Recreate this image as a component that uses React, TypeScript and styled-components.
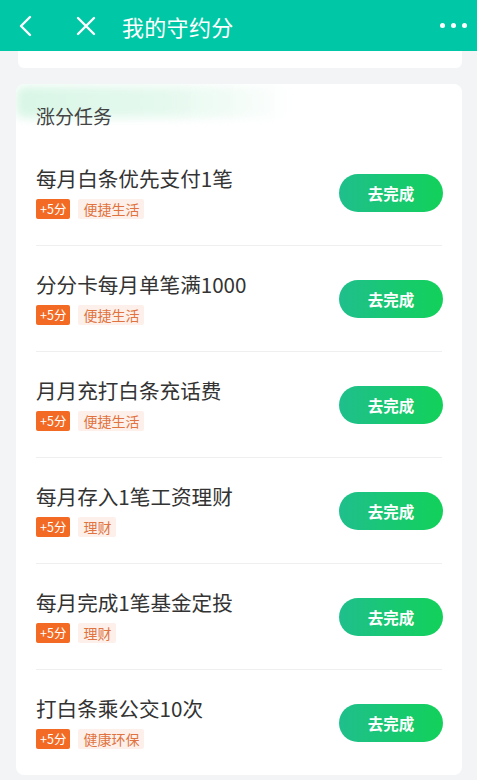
import React from 'react'
import styled, { createGlobalStyle } from 'styled-components'

const GlobalStyle = createGlobalStyle`
  html, body {
    margin: 0;
    padding: 0;
    background: #f3f4f6;
    font-family: "Noto Sans CJK SC", "Noto Sans", "Liberation Sans", sans-serif;
  }
`

const Page = styled.div`
  width: 477px;
  min-height: 780px;
  background: #f3f4f6;
  overflow: hidden;
`

const NavBar = styled.div`
  height: 51px;
  background: #00c8a6;
  display: flex;
  align-items: center;
  padding: 0 10px 0 18px;
  color: #fff;
`

const NavIcon = styled.div`
  height: 22px;
  display: flex;
  align-items: center;
  margin-right: ${({ gap }: { gap: number }) => gap}px;
`

const NavTitle = styled.div`
  font-size: 22px;
  flex: 1;
  letter-spacing: 0.3px;
`

const Dots = styled.div`
  display: flex;
  gap: 6px;
  span {
    width: 5px;
    height: 5px;
    border-radius: 50%;
    background: #fff;
  }
`

const Body = styled.div`
  padding: 0 15px 0 16px;
`

const TopStub = styled.div`
  height: 17px;
  margin-left: 2px;
  background: #fff;
  border-radius: 0 0 6px 6px;
`

const Card = styled.div`
  position: relative;
  margin-top: 16px;
  background: #fff;
  border-radius: 8px;
  padding: 0 20px;
  overflow: hidden;
`

const Glow = styled.div`
  position: absolute;
  left: 0;
  top: 2px;
  width: 280px;
  height: 32px;
  border-radius: 8px;
  background: linear-gradient(90deg, #d8f6e6 0%, #e6f9ef 55%, rgba(244, 252, 248, 0) 100%);
  filter: blur(5px);
  pointer-events: none;
`

const SectionTitle = styled.div`
  position: relative;
  font-size: 19px;
  color: #444;
  padding-top: 20px;
  margin-bottom: 12px;
  line-height: 24px;
`

const Row = styled.div`
  display: flex;
  align-items: center;
  padding: 26px 0;
  border-bottom: ${({ last }: { last?: boolean }) => (last ? 'none' : '1px solid #eeeff0')};
`

const Info = styled.div`
  flex: 1;
  display: flex;
  flex-direction: column;
  gap: 9px;
`

const TaskName = styled.div`
  font-size: 20.6px;
  line-height: 24px;
  color: #333;
`

const Tags = styled.div`
  display: flex;
  gap: 8px;
`

const Score = styled.span`
  height: 20px;
  padding: 0 4px;
  border-radius: 2px;
  background: #f26a24;
  color: #fff;
  font-size: 12.5px;
  line-height: 20px;
`

const Category = styled.span`
  height: 20px;
  padding: 0 5px;
  border-radius: 2px;
  background: #fdf0ea;
  color: #e0733f;
  font-size: 14px;
  line-height: 20px;
`

const Action = styled.button`
  width: 104px;
  height: 38px;
  border: none;
  border-radius: 19px;
  background: linear-gradient(90deg, #1fbf8c 0%, #12d15a 100%);
  color: #fff;
  font-family: inherit;
  font-size: 15.5px;
  font-weight: 700;
  margin-right: -1px;
`

const tasks = [
  { name: '每月白条优先支付1笔', tag: '便捷生活' },
  { name: '分分卡每月单笔满1000', tag: '便捷生活' },
  { name: '月月充打白条充话费', tag: '便捷生活' },
  { name: '每月存入1笔工资理财', tag: '理财' },
  { name: '每月完成1笔基金定投', tag: '理财' },
  { name: '打白条乘公交10次', tag: '健康环保' },
]

const App = () => (
  <Page>
    <GlobalStyle />
    <NavBar>
      <NavIcon gap={44}>
        <svg width="14" height="22" viewBox="0 0 14 22" fill="none">
          <path d="M12 2 L3 11 L12 20" stroke="#fff" strokeWidth="2.4" strokeLinecap="round" strokeLinejoin="round" />
        </svg>
      </NavIcon>
      <NavIcon gap={26}>
        <svg width="20" height="20" viewBox="0 0 20 20" fill="none">
          <path d="M2 2 L18 18 M18 2 L2 18" stroke="#fff" strokeWidth="2.4" strokeLinecap="round" />
        </svg>
      </NavIcon>
      <NavTitle>我的守约分</NavTitle>
      <Dots>
        <span />
        <span />
        <span />
      </Dots>
    </NavBar>
    <Body>
      <TopStub />
      <Card>
        <Glow />
        <SectionTitle>涨分任务</SectionTitle>
        {tasks.map((t, i) => (
          <Row key={i} last={i === tasks.length - 1}>
            <Info>
              <TaskName>{t.name}</TaskName>
              <Tags>
                <Score>+5分</Score>
                <Category>{t.tag}</Category>
              </Tags>
            </Info>
            <Action>去完成</Action>
          </Row>
        ))}
      </Card>
    </Body>
  </Page>
)

export default App
